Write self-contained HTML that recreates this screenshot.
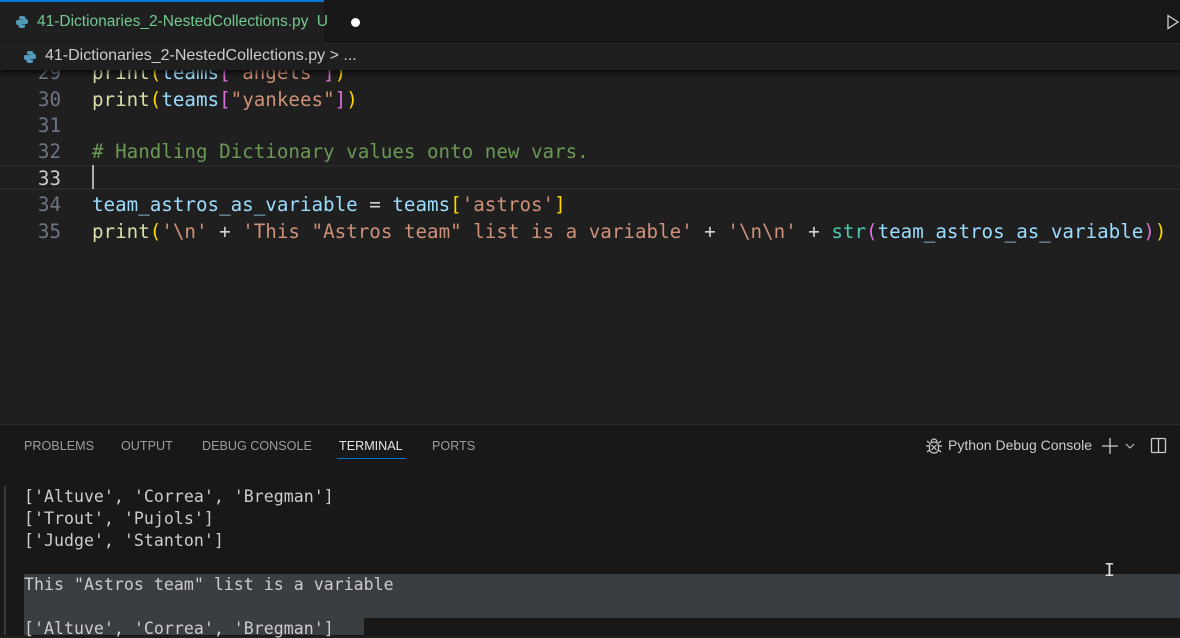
<!DOCTYPE html><html><head><style>
body{margin:0;width:1180px;height:635px;background:#1f1f1f;overflow:hidden;position:relative;font-family:"Liberation Sans","DejaVu Sans",sans-serif}
.abs{position:absolute}
.mono{font-family:"DejaVu Sans Mono","Liberation Mono",monospace;white-space:pre}
.ln{position:absolute;left:0;width:61px;text-align:right;color:#6e7681;font-size:19.2px}
.cd{position:absolute;left:92px;font-size:19.2px;color:#d4d4d4}
.f{color:#dcdcaa}.v{color:#9cdcfe}.s{color:#ce9178}.y{color:#ffd700}.p{color:#da70d6}.c{color:#6a9955}.t{color:#4ec9b0}
.tl{position:absolute;left:24px;font-size:16.6px;color:#cccccc}
</style></head><body>
<div class="abs" style="left:0;top:0;width:1180px;height:43px;background:#181818"></div>
<div class="abs" style="left:0;top:0;width:324px;height:43px;background:#1f1f1f;border-top:2px solid #0078d4;box-sizing:border-box"></div>
<div class="abs" style="left:324px;top:43px;width:856px;height:1px;background:#2b2b2b"></div>
<svg class="abs" style="left:15px;top:15px" width="14" height="14" viewBox="0 0 14 14"><path d="M7 1C4 1 4 2 4 3v1.5h3.2V5H2.5C1 5 1 6.5 1 7.5S1.3 10 2.5 10H4V8.5C4 7.5 5 7 6 7h3c1 0 1.5-.5 1.5-1.5V3C10.5 2 10 1 7 1z" fill="#519aba"/><path d="M7 13c3 0 3-1 3-2V9.5H6.8V9h4.7C13 9 13 7.5 13 6.5S12.7 4 11.5 4H10v1.5C10 6.5 9 7 8 7H5c-1 0-1.5.5-1.5 1.5V11C3.5 12 4 13 7 13z" fill="#519aba"/></svg>
<div class="abs" style="left:37px;top:13px;font-size:15.5px;color:#73c991;white-space:nowrap">41-Dictionaries_2-NestedCollections.py <span style="margin-left:4px">U</span></div>
<div class="abs" style="left:351px;top:18px;width:9px;height:9px;border-radius:50%;background:#fff"></div>
<svg class="abs" style="left:1166px;top:14px" width="14" height="16"><path d="M2 1.5L12 8 2 14.5z" fill="none" stroke="#ccc" stroke-width="1.3"/></svg>
<div class="abs" style="left:0;top:44px;width:1180px;height:26px;background:#1f1f1f;box-shadow:0 3px 5px #000a;z-index:2"></div>
<svg class="abs" style="left:23px;top:50px;z-index:3" width="14" height="14" viewBox="0 0 14 14"><path d="M7 1C4 1 4 2 4 3v1.5h3.2V5H2.5C1 5 1 6.5 1 7.5S1.3 10 2.5 10H4V8.5C4 7.5 5 7 6 7h3c1 0 1.5-.5 1.5-1.5V3C10.5 2 10 1 7 1z" fill="#519aba"/><path d="M7 13c3 0 3-1 3-2V9.5H6.8V9h4.7C13 9 13 7.5 13 6.5S12.7 4 11.5 4H10v1.5C10 6.5 9 7 8 7H5c-1 0-1.5.5-1.5 1.5V11C3.5 12 4 13 7 13z" fill="#519aba"/></svg>
<div class="abs" style="left:45px;top:47px;font-size:16px;color:#cccccc;z-index:3;white-space:nowrap">41-Dictionaries_2-NestedCollections.py &gt; ...</div>

<div class="abs" style="left:0;top:165px;width:1180px;height:25px;border-top:2px solid #282828;border-bottom:2px solid #282828;box-sizing:border-box"></div>
<div class="abs" style="left:92px;top:165px;width:2px;height:24px;background:#aeafad"></div>
<div class="ln mono" style="top:61px">29</div><div class="cd mono" style="top:61px"><span class="f">print</span><span class="y">(</span><span class="v">teams</span><span class="p">[</span><span class="s">"angels"</span><span class="p">]</span><span class="y">)</span></div>
<div class="ln mono" style="top:88px">30</div><div class="cd mono" style="top:88px"><span class="f">print</span><span class="y">(</span><span class="v">teams</span><span class="p">[</span><span class="s">"yankees"</span><span class="p">]</span><span class="y">)</span></div>
<div class="ln mono" style="top:114px">31</div>
<div class="ln mono" style="top:140px">32</div><div class="cd mono c" style="top:140px"># Handling Dictionary values onto new vars.</div>
<div class="ln mono" style="top:167px;color:#cccccc">33</div>
<div class="ln mono" style="top:193px">34</div><div class="cd mono" style="top:193px"><span class="v">team_astros_as_variable</span> = <span class="v">teams</span><span class="y">[</span><span class="s">'astros'</span><span class="y">]</span></div>
<div class="ln mono" style="top:220px">35</div><div class="cd mono" style="top:220px"><span class="f">print</span><span class="y">(</span><span class="s">'\n'</span> + <span class="s">'This "Astros team" list is a variable'</span> + <span class="s">'\n\n'</span> + <span class="t">str</span><span class="p">(</span><span class="v">team_astros_as_variable</span><span class="p">)</span><span class="y">)</span></div>

<div class="abs" style="left:0;top:424px;width:1180px;height:211px;background:#181818;border-top:1px solid #2b2b2b"></div>
<div class="abs" style="top:439px;left:24px;font-size:12.6px;color:#9d9d9d"><span>PROBLEMS</span><span style="position:absolute;left:97px;white-space:nowrap">OUTPUT</span><span style="position:absolute;left:178px;white-space:nowrap">DEBUG CONSOLE</span><span style="position:absolute;left:315px;color:#e7e7e7">TERMINAL</span><span style="position:absolute;left:408px">PORTS</span></div>
<div class="abs" style="left:337px;top:458px;width:69px;height:1px;background:#0078d4"></div>
<svg class="abs" style="left:924px;top:436px" width="20" height="20" viewBox="0 0 20 20" fill="none" stroke="#ccc" stroke-width="1.2"><path d="M7 6a3 3 0 016 0"/><rect x="5.5" y="6" width="9" height="11" rx="4"/><path d="M7.5 9l5 5M12.5 9l-5 5M2 10h3.5M14.5 10H18M3 5l2.5 2M17 5l-2.5 2M3 16l2.5-2M17 16l-2.5-2"/></svg>
<div class="abs" style="left:948px;top:437px;font-size:14px;color:#cccccc">Python Debug Console</div>
<svg class="abs" style="left:1100px;top:437px" width="40" height="18" fill="none" stroke="#ccc" stroke-width="1.3"><path d="M10 1v16M2 9h16"/><path d="M26 7l4 4 4-4" stroke-width="1"/></svg>
<svg class="abs" style="left:1150px;top:437px" width="18" height="18" fill="none" stroke="#ccc" stroke-width="1.3"><rect x="1.5" y="1.5" width="14" height="14" rx="1"/><path d="M8.5 1.5v14"/></svg>
<div class="abs" style="left:4px;top:486px;width:2px;height:149px;background:#3a3a3a"></div>
<div class="abs" style="left:24px;top:574px;width:1156px;height:44px;background:#3a3d41"></div>
<div class="abs" style="left:24px;top:618px;width:340px;height:17px;background:#3a3d41"></div>
<div class="tl mono" style="top:487px">['Altuve', 'Correa', 'Bregman']</div>
<div class="tl mono" style="top:509px">['Trout', 'Pujols']</div>
<div class="tl mono" style="top:531px">['Judge', 'Stanton']</div>
<div class="tl mono" style="top:575px">This "Astros team" list is a variable</div>
<div class="tl mono" style="top:619px">['Altuve', 'Correa', 'Bregman']</div>
<div class="abs" style="left:1104px;top:560px;font-size:18px;color:#ddd;font-family:'DejaVu Sans Mono',monospace">I</div>
</body></html>
